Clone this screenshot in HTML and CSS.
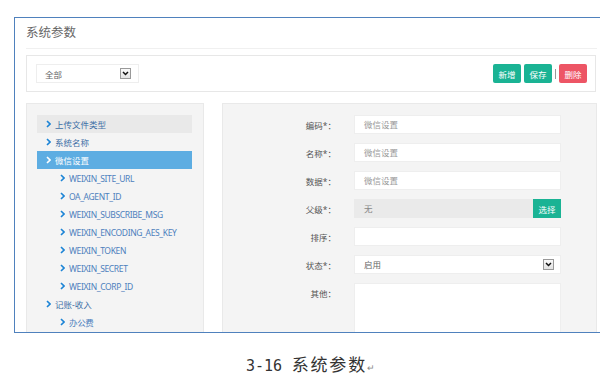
FILE: index.html
```html
<!DOCTYPE html>
<html lang="zh-CN">
<head>
  <meta charset="UTF-8">
  <meta name="viewport" content="width=device-width, initial-scale=1.0">
  <title>系统参数</title>
  <link rel="stylesheet" href="styles.css">
</head>
<body>
  <div class="page">
    <div class="frame">
      <div class="screen">
        <h1 class="title">系统参数</h1>

        <div class="toolbar">
          <div class="select select-all">
            <span>全部</span>
            <span class="drop"><svg viewBox="0 0 7 5"><path d="M1 1l2.5 2.5L6 1"/></svg></span>
          </div>
          <div class="actions">
            <button class="btn btn-green">新增</button>
            <button class="btn btn-green">保存</button>
            <span class="bar"></span>
            <button class="btn btn-red">删除</button>
          </div>
        </div>

        <div class="main">
          <ul class="tree">
            <li class="node hover"><svg class="chev" viewBox="0 0 5 8"><path d="M1 1l3 3-3 3"/></svg>上传文件类型</li>
            <li class="node"><svg class="chev" viewBox="0 0 5 8"><path d="M1 1l3 3-3 3"/></svg>系统名称</li>
            <li class="node active"><svg class="chev" viewBox="0 0 5 8"><path d="M1 1l3 3-3 3"/></svg>微信设置</li>
            <li class="node sub"><svg class="chev" viewBox="0 0 5 8"><path d="M1 1l3 3-3 3"/></svg>WEIXIN_SITE_URL</li>
            <li class="node sub"><svg class="chev" viewBox="0 0 5 8"><path d="M1 1l3 3-3 3"/></svg>OA_AGENT_ID</li>
            <li class="node sub"><svg class="chev" viewBox="0 0 5 8"><path d="M1 1l3 3-3 3"/></svg>WEIXIN_SUBSCRIBE_MSG</li>
            <li class="node sub"><svg class="chev" viewBox="0 0 5 8"><path d="M1 1l3 3-3 3"/></svg>WEIXIN_ENCODING_AES_KEY</li>
            <li class="node sub"><svg class="chev" viewBox="0 0 5 8"><path d="M1 1l3 3-3 3"/></svg>WEIXIN_TOKEN</li>
            <li class="node sub"><svg class="chev" viewBox="0 0 5 8"><path d="M1 1l3 3-3 3"/></svg>WEIXIN_SECRET</li>
            <li class="node sub"><svg class="chev" viewBox="0 0 5 8"><path d="M1 1l3 3-3 3"/></svg>WEIXIN_CORP_ID</li>
            <li class="node"><svg class="chev" viewBox="0 0 5 8"><path d="M1 1l3 3-3 3"/></svg>记账-收入</li>
            <li class="node sub"><svg class="chev" viewBox="0 0 5 8"><path d="M1 1l3 3-3 3"/></svg>办公费</li>
          </ul>

          <div class="form">
            <div class="row">
              <label>编码*：</label>
              <div class="input">微信设置</div>
            </div>
            <div class="row">
              <label>名称*：</label>
              <div class="input">微信设置</div>
            </div>
            <div class="row">
              <label>数据*：</label>
              <div class="input">微信设置</div>
            </div>
            <div class="row">
              <label>父级*：</label>
              <div class="group">
                <div class="input disabled">无</div>
                <button class="btn btn-green btn-pick">选择</button>
              </div>
            </div>
            <div class="row">
              <label>排序：</label>
              <div class="input"></div>
            </div>
            <div class="row">
              <label>状态*：</label>
              <div class="input select">
                <span>启用</span>
                <span class="drop"><svg viewBox="0 0 7 5"><path d="M1 1l2.5 2.5L6 1"/></svg></span>
              </div>
            </div>
            <div class="row row-top">
              <label>其他：</label>
              <div class="input textarea"></div>
            </div>
          </div>
        </div>
      </div>
    </div>

    <p class="caption"><span class="num">3-16</span> 系统参数<span class="ret">↵</span></p>
  </div>
</body>
</html>
```

FILE: styles.css
```css
* {
  margin: 0;
  padding: 0;
  box-sizing: border-box;
}

body {
  width: 600px;
  height: 380px;
  overflow: hidden;
  background-color: #fff;
  font-family: "Noto Sans", "Noto Sans CJK SC", sans-serif;
  color: #555;
}

.page {
  padding: 17px 0 0 14px;
}

.frame {
  width: 600px;
  height: 316px;
  border: 1px solid #4f81bd;
  border-right: none;
  overflow: hidden;
}

.screen {
  width: 571px;
  margin-left: 11px;
}

.title {
  height: 31px;
  padding-top: 6px;
  font-size: 12.5px;
  font-weight: normal;
  color: #666;
  line-height: 17px;
  border-bottom: 1px solid #f0f0f0;
}

.toolbar {
  display: flex;
  align-items: center;
  justify-content: space-between;
  width: 570px;
  height: 37px;
  margin-top: 6px;
  padding: 0 8px 0 9px;
  border: 1px solid #e7e7e7;
}

.select {
  display: flex;
  align-items: center;
  justify-content: space-between;
}

.select-all {
  width: 103px;
  height: 19px;
  padding: 0 7px 0 8px;
  border: 1px solid #eee;
  font-size: 8.5px;
  color: #666;
}

.drop {
  display: flex;
  align-items: center;
  justify-content: center;
  width: 11px;
  height: 11px;
  border: 1px solid #999;
  background: linear-gradient(#fafafa, #e2e2e2);
}

.drop svg {
  width: 7px;
  height: 5px;
  fill: none;
  stroke: #111;
  stroke-width: 1.5;
}

.actions {
  display: flex;
  align-items: center;
}

.btn {
  height: 19px;
  width: 28px;
  border: none;
  border-radius: 2px;
  font-family: "Noto Sans CJK SC", sans-serif;
  font-size: 8.5px;
  color: #fff;
}

.btn-green {
  background-color: #1ab394;
  margin-right: 3px;
}

.btn-red {
  background-color: #ed5565;
}

.bar {
  width: 1px;
  height: 10px;
  background-color: #999;
  margin-right: 3px;
}

.main {
  display: flex;
  gap: 18px;
  margin-top: 11px;
}

.tree {
  list-style: none;
  width: 178px;
  height: 240px;
  padding: 11px 11px 0 10px;
  background-color: #f4f4f4;
  border: 1px solid #e9e9e9;
}

.node {
  display: flex;
  align-items: center;
  height: 18px;
  padding-left: 9px;
  font-size: 8.5px;
  color: #3d6fa6;
}

.node.sub {
  padding-left: 23px;
  color: #4d80bd;
  letter-spacing: -0.35px;
}

.node.hover {
  background-color: #e9e9e9;
}

.node.active {
  background-color: #5dade2;
  color: #fff;
}

.chev {
  width: 5px;
  height: 8px;
  margin-right: 4px;
  fill: none;
  stroke: #1c84d6;
  stroke-width: 1.6;
}

.node.active .chev {
  stroke: #fff;
}

.form {
  width: 375px;
  height: 240px;
  padding-top: 11px;
  background-color: #f4f4f4;
  border: 1px solid #e9e9e9;
}

.row {
  display: flex;
  align-items: center;
  margin-bottom: 9px;
}

.row label {
  width: 113px;
  text-align: right;
  font-size: 8.5px;
  color: #555;
}

.row-top {
  align-items: flex-start;
}

.row-top label {
  padding-top: 4px;
}

.input {
  width: 207px;
  height: 19px;
  margin-left: 18px;
  padding-left: 9px;
  background-color: #fff;
  border: 1px solid #eee;
  font-size: 8.5px;
  line-height: 17px;
  color: #999;
}

.input.select {
  padding-right: 6px;
  color: #666;
}

.group {
  display: flex;
  margin-left: 18px;
}

.group .input {
  width: 179px;
  margin-left: 0;
}

.input.disabled {
  background-color: #eaeaea;
  border-color: #eaeaea;
  color: #888;
}

.btn-pick {
  border-radius: 0;
  margin-right: 0;
}

.input.textarea {
  height: 60px;
}

.caption {
  margin-top: 18px;
  padding-left: 232px;
  font-family: "Noto Sans CJK SC", sans-serif;
  font-size: 17px;
  color: #333;
  letter-spacing: 1.8px;
}

.num {
  font-family: "DejaVu Sans Mono", monospace;
  font-size: 15px;
  letter-spacing: 0;
  margin-right: 4px;
}

.ret {
  font-size: 9px;
  color: #888;
  letter-spacing: 0;
}
```
